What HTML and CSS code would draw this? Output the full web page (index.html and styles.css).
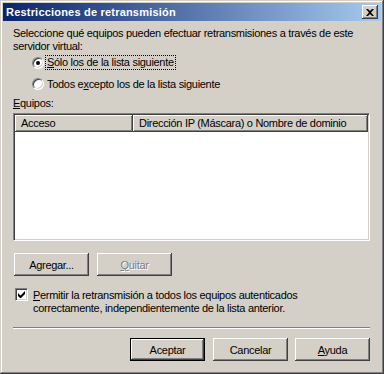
FILE: index.html
```html
<html lang="es">
<head>
  <meta charset="utf-8">
  <title>Restricciones de retransmisión</title>
  <link rel="stylesheet" href="styles.css">
</head>
<body>
  <div class="dialog">
    <div class="titlebar">
      <span class="title">Restricciones de retransmisión</span>
      <span class="close">
        <svg width="8" height="7" viewBox="0 0 8 7"><path d="M0 0h2l2 2 2-2h2L5 3.5 8 7H6L4 5 2 7H0l3-3.5z" fill="#000"/></svg>
      </span>
    </div>
    <div class="content">
      <p class="intro">Seleccione qué equipos pueden efectuar retransmisiones a través de este servidor virtual:</p>
      <div class="radios">
        <label class="radio"><span class="radio-box checked"></span><span class="focus"><u>S</u>ólo los de la lista siguiente</span></label>
        <label class="radio"><span class="radio-box"></span><span>Todos e<u>x</u>cepto los de la lista siguiente</span></label>
      </div>
      <div class="list-label"><u>E</u>quipos:</div>
      <div class="listview">
        <div class="list-header">
          <div class="col col-access">Acceso</div>
          <div class="col col-address">Dirección IP (Máscara) o Nombre de dominio</div>
        </div>
      </div>
      <div class="list-buttons">
        <button class="btn">A<u>g</u>regar...</button>
        <button class="btn" disabled><u>Q</u>uitar</button>
      </div>
      <label class="check">
        <span class="check-box">
          <svg width="7" height="7" viewBox="0 0 7 7"><path d="M0 2v3l2 2h1l4-4V0L2.5 4.5z" fill="#000"/></svg>
        </span>
        <span class="check-text"><u>P</u>ermitir la retransmisión a todos los equipos autenticados<br>correctamente, independientemente de la lista anterior.</span>
      </label>
      <div class="separator"></div>
      <div class="footer">
        <button class="btn default">Aceptar</button>
        <button class="btn">Cancelar</button>
        <button class="btn"><u>A</u>yuda</button>
      </div>
    </div>
  </div>
</body>
</html>
```

FILE: styles.css
```css
:root {
  --face: #d4d0c8;
  --light: #ffffff;
  --shadow: #808080;
  --dark: #404040;
}
body {
  margin: 0;
  width: 384px;
  height: 374px;
  overflow: hidden;
  background-color: var(--face);
  font-family: "Liberation Sans", Arial, sans-serif;
  font-size: 11px;
  letter-spacing: -0.3px;
  color: #000;
}
.dialog {
  box-sizing: border-box;
  width: 384px;
  height: 374px;
  padding: 3px;
  background-color: var(--face);
  /* classic raised window frame */
  box-shadow: inset -1px -1px var(--dark), inset 1px 1px var(--face),
    inset -2px -2px var(--shadow), inset 2px 2px var(--light);
}
.titlebar {
  height: 18px;
  display: flex;
  align-items: center;
  justify-content: space-between;
  padding: 0 3px 0 3px;
  background: linear-gradient(to right, #0a246a, #a6caf0);
}
.title {
  color: #fff;
  font-weight: bold;
  font-size: 11px;
  letter-spacing: 0.2px;
}
.close {
  width: 16px;
  height: 14px;
  display: flex;
  justify-content: center;
  align-items: center;
  background-color: var(--face);
  box-shadow: inset -1px -1px var(--dark), inset 1px 1px var(--light),
    inset -2px -2px var(--shadow);
}
.content {
  padding: 6px 10px 0 10px;
}
.intro {
  margin: 0;
  line-height: 13px;
  width: 358px;
}
.radios {
  margin: 3px 0 0 19px;
  display: flex;
  flex-direction: column;
  gap: 8px;
}
.radio {
  display: flex;
  align-items: center;
  gap: 3px;
  height: 13px;
}
.radio-box {
  box-sizing: border-box;
  width: 12px;
  height: 12px;
  border-radius: 50%;
  background-color: #fff;
  border: 1px solid;
  border-color: var(--shadow) var(--light) var(--light) var(--shadow);
  box-shadow: inset 1px 1px var(--dark), inset -1px -1px var(--face);
  display: flex;
  justify-content: center;
  align-items: center;
}
.radio-box.checked::after {
  content: "";
  width: 4px;
  height: 4px;
  border-radius: 50%;
  background-color: #000;
}
.focus {
  outline: 1px dotted #000;
  padding: 0 1px;
  margin-left: -1px;
  line-height: 13px;
}
.list-label {
  margin-top: 7px;
  line-height: 13px;
}
.listview {
  box-sizing: border-box;
  margin-top: 3px;
  width: 357px;
  height: 128px;
  background-color: #fff;
  border: 1px solid;
  border-color: var(--shadow) var(--light) var(--light) var(--shadow);
  box-shadow: inset 1px 1px var(--dark), inset -1px -1px var(--face);
  padding: 1px;
}
.list-header {
  display: flex;
  height: 17px;
}
.col {
  box-sizing: border-box;
  height: 17px;
  line-height: 16px;
  padding-left: 6px;
  background-color: var(--face);
  box-shadow: inset -1px -1px var(--dark), inset 1px 1px var(--light),
    inset -2px -2px var(--shadow);
}
.col-access {
  width: 118px;
}
.col-address {
  flex: 1;
}
.btn {
  box-sizing: border-box;
  width: 75px;
  height: 23px;
  padding: 0;
  border: none;
  background-color: var(--face);
  font-family: inherit;
  font-size: 11px;
  letter-spacing: -0.3px;
  color: #000;
  box-shadow: inset -1px -1px var(--dark), inset 1px 1px var(--light),
    inset -2px -2px var(--shadow), inset 2px 2px var(--face);
}
.btn:disabled {
  color: var(--shadow);
  text-shadow: 1px 1px var(--light);
}
.btn.default {
  border: 1px solid #000;
}
.list-buttons {
  margin-top: 12px;
  display: flex;
  gap: 8px;
  padding-left: 1px;
}
.check {
  margin-top: 12px;
  display: flex;
  align-items: flex-start;
  gap: 5px;
  padding-left: 2px;
  line-height: 13px;
}
.check-text {
  margin-top: 1px;
}
.check-box {
  box-sizing: border-box;
  flex: none;
  width: 13px;
  height: 13px;
  background-color: #fff;
  border: 1px solid;
  border-color: var(--shadow) var(--light) var(--light) var(--shadow);
  box-shadow: inset 1px 1px var(--dark), inset -1px -1px var(--face);
  display: flex;
  justify-content: center;
  align-items: center;
}
.separator {
  margin-top: 12px;
  width: 357px;
  height: 0;
  border-top: 1px solid var(--shadow);
  border-bottom: 1px solid var(--light);
}
.footer {
  margin-top: 9px;
  display: flex;
  justify-content: flex-end;
  gap: 8px;
  width: 357px;
}
.footer .btn:nth-child(2) {
  margin-right: -1px;
}
```
